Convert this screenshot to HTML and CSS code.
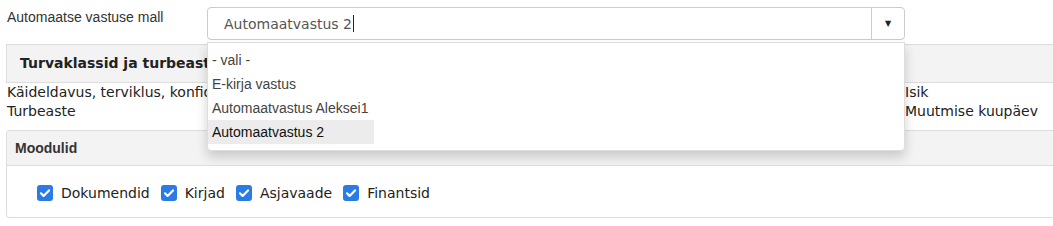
FILE: index.html
```html
<!DOCTYPE html>
<html lang="et">
  <head>
    <meta charset="UTF-8" />
    <title>Automaatvastus</title>
    <link rel="stylesheet" href="styles.css">
  </head>
  <body>
    <div class="page">
      <div class="field-row">
        <label class="field-label">Automaatse vastuse mall</label>
        <div class="select">
          <div class="select-box">
            <span class="select-value">Automaatvastus 2<span class="caret"></span></span>
            <span class="select-arrow">&#9660;</span>
          </div>
          <ul class="select-menu">
            <li class="select-item">- vali -</li>
            <li class="select-item">E-kirja vastus</li>
            <li class="select-item">Automaatvastus Aleksei1</li>
            <li class="select-item active">Automaatvastus 2</li>
          </ul>
        </div>
      </div>

      <div class="panel-plain">
        <div class="panel-plain-heading">Turvaklassid ja turbeaste</div>
        <div class="info-row">
          <div class="info-main">
            <div>Käideldavus, terviklus, konfidentsiaalsus</div>
            <div>Turbeaste</div>
          </div>
          <div class="info-side">
            <div>Isik</div>
            <div>Muutmise kuupäev</div>
          </div>
        </div>
      </div>

      <div class="panel">
        <div class="panel-heading">Moodulid</div>
        <div class="panel-body">
          <label class="check">
            <span class="check-box"><svg viewBox="0 0 16 16"><path d="M4 8.3l2.6 2.6L12 5.4" /></svg></span>
            Dokumendid
          </label>
          <label class="check">
            <span class="check-box"><svg viewBox="0 0 16 16"><path d="M4 8.3l2.6 2.6L12 5.4" /></svg></span>
            Kirjad
          </label>
          <label class="check">
            <span class="check-box"><svg viewBox="0 0 16 16"><path d="M4 8.3l2.6 2.6L12 5.4" /></svg></span>
            Asjavaade
          </label>
          <label class="check">
            <span class="check-box"><svg viewBox="0 0 16 16"><path d="M4 8.3l2.6 2.6L12 5.4" /></svg></span>
            Finantsid
          </label>
        </div>
      </div>
    </div>
  </body>
</html>
```

FILE: styles.css
```css
body {
  margin: 0;
  padding: 0;
  background-color: white;
  font-family: "DejaVu Sans", Verdana, sans-serif;
  font-size: 14px;
  color: #333;
  overflow: hidden;
}

.page {
  width: 1120px;
  padding: 7px 0 0 6px;
}

.field-row {
  display: flex;
  align-items: flex-start;
}

.field-label {
  width: 200px;
  padding-left: 1px;
  font-family: "Liberation Sans", Arial, sans-serif;
  font-size: 14px;
  line-height: 20px;
  color: #333;
}

.select {
  position: relative;
  width: 698px;
}

.select-box {
  display: flex;
  align-items: stretch;
  height: 31px;
  border: 1px solid #ccc;
  border-radius: 4px;
  background-color: white;
}

.select-value {
  flex: 1;
  display: flex;
  align-items: center;
  padding-left: 16px;
  color: #555;
}

.caret {
  display: inline-block;
  width: 1px;
  height: 17px;
  margin-left: 1px;
  background-color: #222;
}

.select-arrow {
  width: 32px;
  display: flex;
  align-items: center;
  justify-content: center;
  border-left: 1px solid #ccc;
  font-size: 8px;
  color: #222;
}

.select-menu {
  position: absolute;
  top: 35px;
  left: 0;
  right: 0;
  z-index: 10;
  margin: 0;
  padding: 5px 0 6px 0;
  list-style: none;
  background-color: white;
  border: 1px solid #ddd;
  border-radius: 0 0 4px 4px;
  box-shadow: 0 6px 12px rgba(0, 0, 0, 0.175);
  font-family: "Liberation Sans", Arial, sans-serif;
  font-size: 14px;
}

.select-item {
  display: table;
  height: 24px;
  line-height: 24px;
  padding: 0 4px;
  color: #444;
}

.select-item.active {
  width: 158px;
  background-color: #ececec;
  color: #111;
}

.panel-plain {
  margin-top: 4px;
  padding-bottom: 9px;
}

.panel-plain-heading {
  height: 37px;
  line-height: 37px;
  padding-left: 13px;
  background-color: #f3f3f3;
  border: 1px solid #ddd;
  border-right: none;
  font-weight: bold;
  color: #222;
}

.info-row {
  display: flex;
  line-height: 19px;
  color: #222;
}

.info-main {
  width: 898px;
  padding-left: 1px;
}

.panel {
  border: 1px solid #ddd;
  border-right: none;
  border-radius: 4px 0 0 4px;
  background-color: white;
}

.panel-heading {
  height: 34px;
  line-height: 34px;
  padding-left: 8px;
  background-color: #f3f3f3;
  border-bottom: 1px solid #ddd;
  border-radius: 4px 0 0 0;
  font-family: "Liberation Sans", Arial, sans-serif;
  font-weight: bold;
  color: #333;
}

.panel-body {
  display: flex;
  align-items: center;
  height: 49px;
  padding: 2px 0 0 30px;
  gap: 11px;
}

.check {
  display: flex;
  align-items: center;
  gap: 8px;
  color: #222;
}

.check-box {
  display: flex;
  width: 16px;
  height: 16px;
  border-radius: 3px;
  background-color: #2b7be6;
}

.check-box svg {
  width: 16px;
  height: 16px;
  fill: none;
  stroke: white;
  stroke-width: 2.2;
  stroke-linecap: round;
  stroke-linejoin: round;
}
```
